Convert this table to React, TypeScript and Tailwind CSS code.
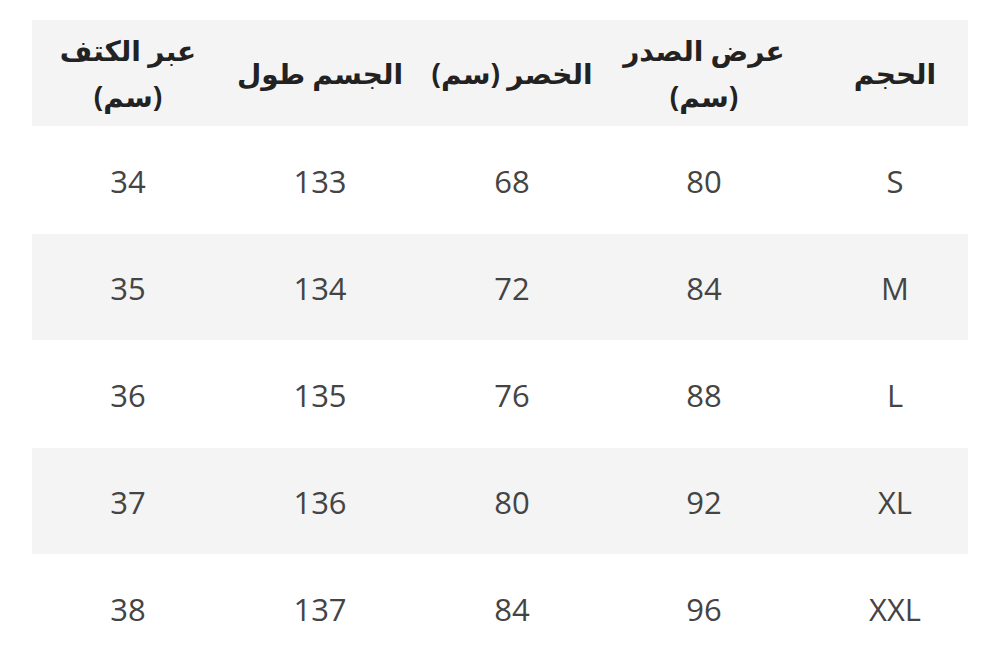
const headers = [
  ['الحجم'],
  ['عرض الصدر', '(سم)'],
  ['الخصر (سم)'],
  ['الجسم طول'],
  ['عبر الكتف', '(سم)'],
];

const rows = [
  ['S', '80', '68', '133', '34'],
  ['M', '84', '72', '134', '35'],
  ['L', '88', '76', '135', '36'],
  ['XL', '92', '80', '136', '37'],
  ['XXL', '96', '84', '137', '38'],
];

// column widths from right to left (rtl)
const cols = 'grid-cols-[168px_192px_192px_192px_192px]';

const App = () => {
  return (
    <div className="min-h-screen bg-white pt-[20px] pl-[32px] font-['Open_Sans','DejaVu_Sans',sans-serif]">
      <div dir="rtl" className="w-[936px]">
        {/* Header */}
        <div className={`grid ${cols} h-[106px] bg-[#f4f4f4] items-center`}>
          {headers.map((h, i) => (
            <div
              key={i}
              className={`text-center text-[28px] font-bold leading-[46px] text-[#222] ${i === 0 ? 'pl-[22px]' : ''}`}
            >
              {h.map((line, j) => (
                <div key={j}>{line}</div>
              ))}
            </div>
          ))}
        </div>

        {/* Rows */}
        {rows.map((r, i) => (
          <div
            key={r[0]}
            className={`grid ${cols} items-center pt-[2px] ${i % 2 === 1 ? 'bg-[#f4f4f4] h-[106px]' : 'bg-white h-[108px]'}`}
          >
            {r.map((c, j) => (
              <div
                key={j}
                className={`text-center text-[31px] text-[#444] ${j === 0 ? 'pl-[22px]' : ''}`}
              >
                {c}
              </div>
            ))}
          </div>
        ))}
      </div>
    </div>
  );
};

export default App;
